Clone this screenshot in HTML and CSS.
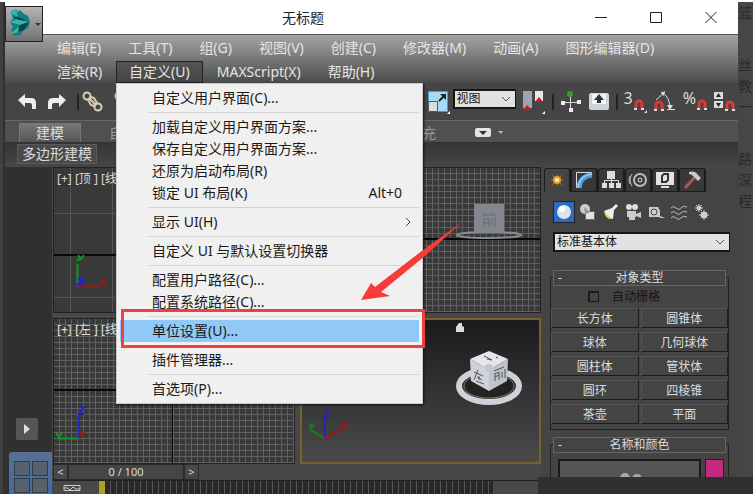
FILE: index.html
```html
<!DOCTYPE html>
<html lang="zh-CN">

<head>
  <meta charset="UTF-8" />
  <meta name="viewport" content="width=device-width, initial-scale=1.0" />
  <title>无标题</title>
  <link rel="stylesheet" href="styles.css">
</head>

<body>
  <div class="desktop">
    <div class="edge"></div>

    <div class="window">
      <header class="titlebar">
        <button class="app-button" aria-label="应用程序">
          <svg width="36" height="34" viewBox="0 0 36 34">
            <path fill="#0f7f80" d="M5 4l5-2 2 3 2-2 4 4 4 2 2 6-2 6-4 2-4 5-8 1 2-4-3-1 2-4-3-5 3-3z" />
            <path fill="#38b5ac" d="M5 4l5-2 2 8-6-3zM4 15l8-3 10 3-8 3zM5 27l7-7 1 5z" />
            <path fill="#0a4549" d="M12 10l9 4-8-1-6-3zM14 18l9-3-5 8-6 2z" />
            <path fill="#333" d="M29 16h6l-3 3z" />
          </svg>
        </button>
        <h1 class="title">无标题</h1>
        <div class="window-controls">
          <button aria-label="最小化"><svg width="14" height="14"><path d="M1 7.5h12" /></svg></button>
          <button aria-label="最大化"><svg width="14" height="14"><path d="M1.500 2.500h11v10h-11z" /></svg></button>
          <button aria-label="关闭"><svg width="14" height="14"><path d="M1.500 2l11 11M12.500 2l-11 11" /></svg></button>
        </div>
      </header>

      <nav class="menubar">
        <button>编辑(E)</button>
        <button>工具(T)</button>
        <button>组(G)</button>
        <button>视图(V)</button>
        <button>创建(C)</button>
        <button>修改器(M)</button>
        <button>动画(A)</button>
        <button>图形编辑器(D)</button>
        <button>渲染(R)</button>
        <div class="menu-open">
          <button class="active">自定义(U)</button>
          <div class="dropdown">
            <button>自定义用户界面(C)...</button>
            <hr>
            <button>加载自定义用户界面方案...</button>
            <button>保存自定义用户界面方案...</button>
            <button>还原为启动布局(R)</button>
            <button>锁定 UI 布局(K)<kbd>Alt+0</kbd></button>
            <hr>
            <button>显示 UI(H)<svg class="submenu" width="6" height="10"><path d="M1 1l4 4-4 4" /></svg></button>
            <hr>
            <button>自定义 UI 与默认设置切换器</button>
            <hr>
            <button>配置用户路径(C)...</button>
            <button>配置系统路径(C)...</button>
            <hr>
            <button class="selected">单位设置(U)...</button>
            <hr>
            <button>插件管理器...</button>
            <hr>
            <button>首选项(P)...</button>
          </div>
        </div>
        <button>MAXScript(X)</button>
        <button>帮助(H)</button>
      </nav>

      <div class="toolbar">
        <div class="tools tools-left">
          <button aria-label="撤消"><svg width="20" height="18"><path fill="#eee" d="M1 7l7-6v4h6q5 0 5 5v6h-4v-4q0-2-2-2H8v4z" /></svg></button>
          <button aria-label="重做"><svg width="20" height="18"><path fill="#eee" d="M19 7l-7-6v4H6q-5 0-5 5v6h4v-4q0-2 2-2h5v4z" /></svg></button>
          <i class="divider"></i>
          <button aria-label="选择并链接">
            <svg width="22" height="22" fill="none" stroke="#d8cfb4" stroke-width="2"><circle cx="5" cy="5" r="3.500" /><circle cx="16" cy="16" r="3.500" /><path d="M6 9l3-3 3 1 3 5-3 3-3-1zM8 8l5 5" /></svg>
          </button>
          <button aria-label="断开链接">
            <svg width="22" height="22" fill="none" stroke="#d8cfb4" stroke-width="2"><circle cx="5" cy="5" r="3.500" /><circle cx="16" cy="16" r="3.500" /><path stroke-dasharray="2 2" d="M2 14h6M3 18h5" /></svg>
          </button>
        </div>
        <div class="tools tools-right">
          <button aria-label="缩放">
            <svg width="24" height="26"><path fill="#a5dcf5" stroke="#4b9cc9" d="M1.500 2.500h19v20h-19z" /><path fill="#ddd" stroke="#555" d="M1.500 12.500h9v10h-9z" /><path stroke="#222" stroke-width="2" d="M12 12l5-5" /><path fill="#222" d="M13 5h6v6z" /><path fill="#fff" d="M20 25l3-3v3z" /></svg>
          </button>
          <select aria-label="参考坐标系">
            <option>视图</option>
          </select>
          <button aria-label="镜像">
            <svg width="24" height="26"><path fill="#9da4b5" d="M1 2h9v17H1z" /><path fill="#e8e8ec" d="M13 2h8v10h-8z" /><path fill="#d4151b" d="M1 21l4-5 5 5zM13 13l4-5 4 5z" /><path fill="#fff" d="M20 25l3-3v3z" /></svg>
          </button>
          <i class="divider"></i>
          <button aria-label="操纵">
            <svg width="22" height="22"><path stroke="#ddd" d="M10.500 4v15M3 11.500h16" /><path fill="#eee" d="M1 10h4v4H1zM17 9h4v4h-4zM9 17h4v4H9z" /><circle cx="10" cy="3" r="3" fill="#36a02b" /></svg>
          </button>
          <button aria-label="键盘快捷键覆盖">
            <svg width="22" height="20"><rect x="1" y="1" width="20" height="17" rx="2" fill="#cdd3dc" /><path fill="#f5f5f5" d="M4 2h14v10H4z" /><path fill="#333" d="M11 2l5 6h-3v3H9V8H6z" /></svg>
          </button>
          <i class="divider"></i>
          <button class="snap" aria-label="捕捉开关">3<svg width="14" height="15"><path class="magnet" d="M3 11V6a3 3 0 0 1 6 0v5" /><path fill="#ddd" d="M1 10h3v2H1zM8 10h3v2H8zM11 15l3-3v3z" /></svg></button>
          <button aria-label="角度捕捉">
            <svg width="24" height="24"><path fill="none" stroke="#ddd" d="M3 10l9-8M8 2q9 4 9 17M14 19.500h8" /><path fill="#ddd" d="M12 1l-1 5-3-3zM14 15h6l-3 5z" /><path class="magnet" d="M3 20v-5a3 3 0 0 1 6 0v5" /><path fill="#ddd" d="M1 19h3v2H1zM8 19h3v2H8z" /></svg>
          </button>
          <button class="snap" aria-label="百分比捕捉">%<svg width="11" height="15"><path class="magnet" d="M3 11V6a3 3 0 0 1 6 0v5" /><path fill="#ddd" d="M1 10h3v2H1zM8 10h3v2H8z" /></svg></button>
          <button aria-label="微调器捕捉">
            <svg width="22" height="24"><path fill="#ddd" d="M1 2h9v7H1zM1 11h9v7H1z" /><path fill="#222" d="M3 7l2.500-4L8 7zM3 13l2.500 4L8 13z" /><path class="magnet" d="M14 20v-5a3 3 0 0 1 6 0v5" /><path fill="#ddd" d="M12 19h3v2h-3zM19 19h3v2h-3z" /></svg>
          </button>
        </div>
      </div>

      <div class="ribbon-tabs">
        <button class="current">建模</button>
        <button>自由形式</button>
        <button>选择</button>
        <button>对象绘制</button>
        <button>填充</button>
        <button class="ribbon-toggle" aria-label="最小化功能区"><svg width="30" height="10"><rect width="16" height="9" rx="2" fill="#e2e2e8" /><path fill="#333" d="M4 3h8l-4 4z" /><path fill="#bbb" d="M23 3h5l-2 3z" /></svg></button>
      </div>
      <div class="ribbon-body">
        <button>多边形建模</button>
      </div>

      <main class="workspace">
        <aside class="rail">
          <button class="play" aria-label="展开"><svg width="8" height="10"><path fill="#ddd" d="M1 0l6 5-6 5z" /></svg></button>
          <button class="layout-tab" aria-label="视口布局"><i></i><i></i><i></i><i></i></button>
        </aside>

        <div class="center">
          <div class="viewports">
            <section class="viewport top">
              <p>[+] [顶 ] [线框 ]</p>
              <svg class="axis" width="40" height="42"><path stroke="#0c9a20" d="M6.500 36V14M6 11l3-3M7 5l3 4 3-4" /><path stroke="#8c1d1d" d="M6 36.500h24M30 30l5 5M35 30l-5 5" /><path stroke="#2020d0" d="M7 29h5l-5 5h5" /></svg>
            </section>
            <section class="viewport front">
              <svg class="cube-flat" width="70" height="40"><ellipse cx="35" cy="34" rx="32" ry="3" fill="none" stroke="#8a8c90" stroke-width="2" /><path fill="#84878e" d="M20 3h30v29H20z" /><path fill="none" stroke="#676a71" d="M28 14h14M30 17v9M30 18h5v8M30 22h5M38 17v7M41 16v10l-2-1M31 12l2 2M39 11l-2 3" /></svg>
            </section>
            <section class="viewport left">
              <p>[+] [左 ] [线框 ]</p>
              <svg class="axis" width="40" height="42"><path stroke="#2525b8" d="M24.500 36V14M25 5h5l-5 7h5" /><path stroke="#0c9a20" d="M24 36.500H4M2 31l3 4 3-4" /><path stroke="#8c1d1d" d="M26 30l4 5M30 30l-4 5" /></svg>
            </section>
            <section class="viewport persp">
              <svg class="home" width="10" height="10"><path fill="#ddd" d="M1 10V5l3-4h3v3l2 1v5z" /></svg>
              <svg class="cube" width="72" height="58" viewBox="0 0 72 58">
                <ellipse cx="36" cy="37" rx="30" ry="16" fill="none" stroke="#cfd2d8" stroke-width="6" />
                <ellipse cx="36" cy="37" rx="25" ry="12" fill="#24211e" stroke="#777" />
                <path fill="#e4e6eb" d="M17 10L36 2l19 8-19 11z" />
                <path fill="#cfd2d9" d="M17 10l19 11v21L18 32z" />
                <path fill="#bfc3cc" d="M55 10L36 21v21l18-10z" />
                <path fill="none" stroke="#50535a" d="M31 7l8 4M34 10l5 1M43 8l2 1M21 23l9 4M25 21l-4 10M24 28l5 3M26 27v4M23 32l8 3M41 22l10-4M42 24v8M42 25l4-2v8M42 28l4-2M49 23v6M52 20v9" />
                <circle cx="36" cy="19" r="4" fill="#c3c5cb" />
              </svg>
              <svg class="axis" width="50" height="34"><path stroke="#2525b8" d="M22.500 28V8M23 1h5l-5 6h5" /><path stroke="#9a1a1a" d="M23 28l17-9M40 13l5 5M45 13l-5 5" /><path stroke="#16801e" d="M22 28L9 20M7 13l3 4 3-4M10 17l-2 3" /></svg>
            </section>
          </div>

          <div class="time-slider">
            <button>&lt;</button>
            <button class="frame">0 / 100</button>
            <button>&gt;</button>
          </div>
          <div class="trackbar">
            <svg width="18" height="8"><path fill="none" stroke="#ccc" d="M1 1.500h16v5H1zM1 4h4l2 2 3-3 3 2h4" /></svg>
            <div class="ticks"></div>
          </div>
        </div>

        <aside class="command-panel">
          <div class="panel-tabs">
            <button class="current" aria-label="创建"><svg width="20" height="20"><path stroke="#c06a18" d="M10 4v12M4 10h12M5 5l10 10M15 5L5 15" /><circle cx="10" cy="10" r="4" fill="#f09a28" /><circle cx="10" cy="10" r="2" fill="#fff0b0" /></svg></button>
            <button aria-label="修改"><svg width="20" height="20"><path fill="none" stroke="#ddd" d="M2.500 18V2.500H18" /><path fill="none" stroke="#4ba3e3" stroke-width="5" d="M5 18Q6 6 18 5" /><path fill="none" stroke="#bfe2f8" d="M4 18Q5 5 18 4" /></svg></button>
            <button aria-label="层次"><svg width="20" height="20"><path fill="#ddd" d="M6 1h8v8H6zM1 13h5v5H1zM8 13h5v5H8zM15 13h5v5h-5z" /><path fill="none" stroke="#ddd" d="M10.500 9v4M3.500 13v-2.500h14V13" /></svg></button>
            <button aria-label="运动"><svg width="20" height="20" fill="none" stroke="#bbb"><circle cx="12" cy="10" r="6" stroke-width="2" /><circle cx="12" cy="10" r="2" stroke="#eee" /><path d="M4 4q-4 6 0 12M2 6q-2 4 0 8" /></svg></button>
            <button aria-label="显示"><svg width="20" height="20"><path fill="#e2e2e2" d="M1 2h18v13H1zM6 16h8v2H6z" /><path fill="none" stroke="#333" stroke-width="2" d="M7 6l2-2h4v6l-2 2H7z" /></svg></button>
            <button aria-label="实用程序"><svg width="20" height="20"><path stroke="#a45a50" stroke-width="3" d="M3 18L13 7" /><path fill="#ccc" d="M7 2q6-2 9 3l3 3-3 3-4-4q-2-3-5-3z" /></svg></button>
          </div>
          <div class="categories">
            <button class="current" aria-label="几何体"><svg width="18" height="18"><circle cx="9" cy="9" r="7" fill="#dfe2ea" /><circle cx="7" cy="6" r="3" fill="#fff" /></svg></button>
            <button aria-label="图形"><svg width="18" height="18"><circle cx="7" cy="6" r="5" fill="#ccc" /><path fill="#e4e4e4" stroke="#666" d="M7.500 8.500h9v8h-9z" /><path fill="#999" d="M6 4l6 5-5 3z" /></svg></button>
            <button aria-label="灯光"><svg width="18" height="18"><path fill="#eee" d="M3 8l8-3 4-4 2 2-4 4-1 9q-5 0-9-8z" /><path fill="#e3c866" d="M3 9l8 7q-6 1-8-7z" /></svg></button>
            <button aria-label="摄影机"><svg width="18" height="18"><circle cx="5" cy="4" r="3" fill="#ddd" /><circle cx="11" cy="4" r="3" fill="#ddd" /><path fill="#ccc" d="M3 8h9v6H3zM12 11l5-2v6l-5-2zM5 14h6v3H5z" /></svg></button>
            <button aria-label="辅助对象"><svg width="18" height="18"><path fill="#ccc" d="M2 4h9l2 4v6H2zM13 13l5 2h-5z" /><circle cx="7" cy="9" r="3" fill="none" stroke="#444" /></svg></button>
            <button aria-label="空间扭曲"><svg width="18" height="18" fill="none" stroke="#bbb"><path d="M1 5q2-3 5 0t5 0t6-1M1 10q2-3 5 0t5 0t6-1M1 15q2-3 5 0t5 0t6-1" /></svg></button>
            <button aria-label="系统"><svg width="18" height="18" fill="#ddd" stroke="#ccc"><circle cx="6" cy="5" r="2" /><circle cx="11" cy="12" r="3" /><path d="M6 1v8M2 5h8M3 2l6 6M9 2L3 8M11 7v10M6 12h10M8 9l6 6M14 9l-6 6" /></svg></button>
          </div>
          <select class="object-kind" aria-label="对象类别">
            <option>标准基本体</option>
          </select>

          <section class="rollout">
            <h2><span>-</span>对象类型</h2>
            <label><input type="checkbox" disabled>自动栅格</label>
            <div class="object-types">
              <button>长方体</button>
              <button>圆锥体</button>
              <button>球体</button>
              <button>几何球体</button>
              <button>圆柱体</button>
              <button>管状体</button>
              <button>圆环</button>
              <button>四棱锥</button>
              <button>茶壶</button>
              <button>平面</button>
            </div>
          </section>

          <section class="rollout">
            <h2><span>-</span>名称和颜色</h2>
            <div class="name-color">
              <input type="text" aria-label="名称">
              <button class="swatch" aria-label="颜色"></button>
            </div>
          </section>
        </aside>
      </main>
    </div>

    <div class="behind">
      <p>篮</p>
      <p>丝<br>教育<br>一流</p>
      <p>路教<br>深<br>程面</p>
    </div>

    <div class="taskbar"><svg width="24" height="8"><circle cx="6" cy="6" r="5" /><circle cx="18" cy="7" r="5" /></svg></div>

    <!-- callout on the unit setup entry -->
    <div class="callout-box"></div>
    <svg class="callout-arrow" width="106" height="80"><path d="M0 79l10-17 4 4 48-37L101 1 64 35 20 71l9 4z" /></svg>
  </div>
</body>

</html>
```
FILE: styles.css
```css
* {
  box-sizing: border-box;
}

body {
  margin: 0;
  background-color: #fff;
  font-family: "Noto Sans", "Noto Sans CJK SC", sans-serif;
  font-size: 14px;
  color: #ddd;
}

button,
select,
input {
  font: inherit;
  color: inherit;
}

button {
  padding: 0;
  border: none;
  background: none;
  white-space: nowrap;
}

svg {
  display: block;
  flex: none;
}

p,
h1,
h2 {
  margin: 0;
  font-weight: normal;
}

.desktop {
  position: relative;
  display: grid;
  grid-template-columns: 5px minmax(0, 1fr) 15px;
  height: 100vh;
  overflow: hidden;
}

.edge {
  margin-top: 2px;
  background-color: #404040;
  border-right: 2px solid #303030;
}

.window {
  display: flex;
  flex-direction: column;
  min-height: 0;
  background-color: #444;
}

/* title bar */
.titlebar {
  position: relative;
  display: flex;
  align-items: center;
  height: 34px;
  flex: none;
  background-color: #fff;
  color: #222;
}

.app-button {
  position: absolute;
  left: 0;
  top: 6px;
  z-index: 2;
  border: 1px solid #222;
  background: linear-gradient(#b5b5b5, #707070);
}

.title {
  flex: 1;
  padding-left: 12px;
  text-align: center;
  font-size: 14px;
}

.window-controls {
  display: flex;
  gap: 41px;
  width: 149px;
  padding-left: 5px;
}

.window-controls path {
  fill: none;
  stroke: #222;
}

/* menus */
.menubar {
  display: flex;
  flex-wrap: wrap;
  align-content: flex-end;
  gap: 2px 1px;
  flex: none;
  height: 49px;
  padding: 0 40px 0 39px;
  border-top: 1px solid #555;
  background: linear-gradient(#a4a4a4, #4a4a4a);
  color: #e4e4e4;
}

.menubar button {
  height: 22px;
  padding: 0 13px;
  line-height: 22px;
}

.menu-open {
  position: relative;
}

.menubar .active {
  background: linear-gradient(#555, #444);
  box-shadow: inset 0 0 0 1px #222;
}

.dropdown {
  position: absolute;
  top: 100%;
  left: 0;
  z-index: 3;
  display: flex;
  flex-direction: column;
  width: 307px;
  padding: 3px;
  border: 1px solid #ccc;
  background-color: #f0f0f0;
  box-shadow: 1px 1px 2px #111;
  color: #1a1a1a;
}

.dropdown button {
  display: flex;
  align-items: center;
  justify-content: space-between;
  padding: 0 17px 0 32px;
}

.dropdown hr {
  align-self: stretch;
  height: 1px;
  margin: 3px 0 3px 28px;
  border: none;
  background-color: #d4d4d4;
}

.dropdown .selected {
  background-color: #90c8f6;
}

.dropdown .submenu {
  margin-right: -9px;
  fill: none;
  stroke: #444;
}

kbd {
  font: inherit;
}

/* main toolbar */
.toolbar {
  display: flex;
  justify-content: space-between;
  flex: none;
  height: 37px;
  background-color: #454545;
}

.tools {
  display: flex;
  align-items: center;
}

.tools-left {
  gap: 10px;
  padding-left: 12px;
}

.tools-left .divider {
  margin: 0 -7px 0 0;
}

.tools-right {
  gap: 6px;
  padding-right: 3px;
}

.divider {
  width: 2px;
  height: 16px;
  background-color: #222;
}

.tools select {
  width: 63px;
  height: 20px;
  margin: 0 0 6px -4px;
}

.snap {
  display: flex;
  align-items: flex-start;
  line-height: 16px;
  font-size: 16px;
}

.snap svg {
  margin-top: 8px;
}

.magnet {
  fill: none;
  stroke: #d83a38;
  stroke-width: 3;
}

select {
  appearance: none;
  padding: 0 2px;
  border: 2px solid #161616;
  border-right-width: 1px;
  border-radius: 0;
  background: #e2e2e2 url("data:image/svg+xml,%3Csvg xmlns='http://www.w3.org/2000/svg' width='10' height='6'%3E%3Cpath d='M1 1l4 4 4-4' fill='none' stroke='%23555'/%3E%3C/svg%3E") no-repeat right 4px center;
  color: #111;
  font-size: 12px;
  line-height: 14px;
}

/* ribbon */
.ribbon-tabs {
  display: flex;
  align-items: flex-end;
  gap: 25px;
  flex: none;
  height: 23px;
  padding-left: 14px;
  border-top: 1px solid #666;
  border-bottom: 1px solid #333;
  background-color: #505050;
  color: #999;
}

.ribbon-tabs button {
  height: 19px;
  padding: 0 14px;
  line-height: 18px;
}

.ribbon-tabs .current {
  width: 62px;
  margin-right: -11px;
  border: 1px solid #777;
  border-bottom: none;
  background: linear-gradient(#777, #555);
  color: #ddd;
}

.ribbon-tabs .ribbon-toggle {
  padding: 0;
}

.ribbon-body {
  flex: none;
  height: 24px;
  padding: 1px 12px;
  background: linear-gradient(#363636, #464646);
}

.ribbon-body button {
  height: 20px;
  padding: 0 4px;
  border: 1px solid #5a5a5a;
  background-color: #4a4a4a;
  line-height: 18px;
}

/* workspace */
.workspace {
  display: grid;
  grid-template-columns: 47px minmax(0, 1fr) 197px;
  flex: 1;
  min-height: 0;
}

.rail {
  display: flex;
  flex-direction: column;
  justify-content: flex-end;
  gap: 12px;
  background-color: #303030;
}

.play {
  display: flex;
  align-items: center;
  justify-content: center;
  width: 22px;
  height: 22px;
  margin-left: 11px;
  border-radius: 2px;
  background-color: #555;
}

.layout-tab {
  display: grid;
  grid-template-columns: 16px 16px;
  grid-auto-rows: 15px;
  gap: 2px;
  height: 42px;
  margin-left: 4px;
  padding: 9px 5px 0;
  border-radius: 3px 0 0 0;
  background: linear-gradient(#587090, #3d6da8);
}

.layout-tab i {
  border: 1px solid #303c48;
  background-color: #56626c;
}

.center {
  display: flex;
  flex-direction: column;
  min-height: 0;
  padding-left: 1px;
  background-color: #484848;
}

.viewports {
  display: grid;
  grid-template: 1fr 1fr / minmax(0, 1fr) minmax(0, 1fr);
  gap: 5px;
  flex: 1;
  min-height: 0;
}

.viewport {
  position: relative;
  border: 1px solid #222;
  background-color: #393939;
}

.viewport p {
  position: relative;
  padding: 3px;
  font-size: 12px;
  line-height: 16px;
  white-space: pre;
}

.viewport svg {
  position: absolute;
  fill: none;
}

.top {
  background-image:
    linear-gradient(transparent 86px, #080808 86px, #080808 88px, transparent 88px),
    repeating-linear-gradient(transparent 0 45px, #555 45px 46px, transparent 46px 84px),
    repeating-linear-gradient(90deg, transparent 0 16px, #555 16px 17px, transparent 17px 42px);
}

.front,
.left {
  background-image:
    linear-gradient(transparent 70px, #080808 70px, #080808 72px, transparent 72px),
    repeating-linear-gradient(transparent 0 5px, #606060 5px 6px),
    repeating-linear-gradient(90deg, transparent 0 5px, #606060 5px 6px);
}

.left {
  background-image:
    linear-gradient(transparent 70px, #080808 70px, #080808 72px, transparent 72px),
    linear-gradient(90deg, transparent 118px, #080808 118px, #080808 119px, transparent 119px),
    repeating-linear-gradient(transparent 0 5px, #606060 5px 6px),
    repeating-linear-gradient(90deg, transparent 0 5px, #606060 5px 6px);
}

.persp {
  border: 2px solid #73642c;
  background: linear-gradient(#1b1b1b, #4a4a4a);
}

.axis {
  stroke-width: 2;
}

.top .axis {
  left: 17px;
  bottom: 20px;
}

.left .axis {
  left: 0;
  bottom: 19px;
}

.persp .axis {
  left: 0;
  bottom: 18px;
}

.cube-flat {
  right: 16px;
  top: 33px;
}

.home {
  right: 74px;
  top: 2px;
}

.cube {
  right: 14px;
  top: 29px;
}

.time-slider {
  display: flex;
  flex: none;
  height: 16px;
  font-size: 11px;
  line-height: 14px;
}

.time-slider button {
  width: 15px;
  border: 1px solid #2a2a2a;
}

.time-slider .frame {
  width: 116px;
  background-color: #454545;
}

.trackbar {
  display: flex;
  align-items: center;
  flex: none;
  height: 14px;
  padding: 0 48px 0 10px;
  border-top: 1px solid #222;
}

.ticks {
  flex: 1;
  align-self: stretch;
  margin-left: 18px;
  border-left: 6px solid #aaa024;
  background: repeating-linear-gradient(90deg, #282828 0 5px, #555 5px 6px);
}

/* command panel */
.command-panel {
  min-height: 0;
  overflow: hidden;
  padding: 1px 9px 0 3px;
  background-color: #444;
  font-size: 12px;
}

.panel-tabs {
  display: flex;
}

.panel-tabs button {
  display: flex;
  align-items: center;
  justify-content: center;
  width: 27px;
  height: 24px;
  border: 1px solid #1c1c1c;
  border-width: 1px 2px 1px 1px;
  border-radius: 3px 3px 0 0;
  background-color: #383838;
}

.panel-tabs .current {
  border-bottom-color: #444;
  background-color: #444;
}

.categories {
  display: flex;
  gap: 1px;
  padding: 9px 0 9px 9px;
}

.categories button {
  padding: 1px;
  border: 1px solid transparent;
}

.categories .current {
  border-color: #222;
  background-color: #2e6cc4;
}

.object-kind {
  display: block;
  width: 177px;
  height: 20px;
  margin-left: 9px;
}

.rollout {
  margin: 25px 0 0 6px;
  border: 1px solid #222;
  width: 179px;
}

.rollout + .rollout {
  margin-top: 14px;
}

.rollout h2 {
  position: relative;
  height: 16px;
  margin: -8px 2px 0;
  border: 1px solid #666;
  background-color: #444;
  font-size: 12px;
  line-height: 14px;
  text-align: center;
}

.rollout h2 span {
  position: absolute;
  left: 4px;
}

.rollout label {
  display: flex;
  align-items: center;
  gap: 13px;
  height: 22px;
  padding: 0 0 2px 37px;
  color: #151515;
}

.rollout input {
  appearance: none;
  margin: 0;
  border: 2px solid #191919;
  border-radius: 0;
}

.rollout input[type="checkbox"] {
  width: 11px;
  height: 11px;
  border-width: 2px 1px 1px 2px;
}

.object-types {
  display: grid;
  grid-template-columns: 1fr 1fr;
  gap: 4px 2px;
  padding-bottom: 5px;
}

.object-types button {
  height: 20px;
  border: 1px solid #555;
  border-right-color: #1c1c1c;
  border-bottom-color: #1c1c1c;
  line-height: 17px;
}

.name-color {
  display: flex;
  gap: 4px;
  padding: 6px 4px 6px 7px;
}

.name-color input {
  flex: 1;
  min-width: 0;
  height: 22px;
  background-color: #555;
}

.swatch {
  width: 19px;
  border: 1px solid #222;
  background-color: #c42b80;
}

/* page and bar around the window */
.behind {
  overflow: hidden;
  margin-top: 2px;
  background-color: #464646;
  color: #2a2a2a;
  line-height: 21px;
  white-space: nowrap;
}

.behind p {
  margin-bottom: 31px;
}

.taskbar {
  position: absolute;
  right: 0;
  bottom: 0;
  width: 215px;
  height: 17px;
  background-color: #303030;
}

.taskbar svg {
  position: absolute;
  left: 81px;
  bottom: 100%;
  height: 5px;
  fill: #aaa;
}

.callout-box {
  position: absolute;
  left: 121px;
  top: 309px;
  z-index: 4;
  width: 304px;
  height: 39px;
  border: 3px solid #ee4040;
}

.callout-arrow {
  position: absolute;
  left: 361px;
  top: 221px;
  z-index: 4;
  fill: #f53c3a;
}
```
